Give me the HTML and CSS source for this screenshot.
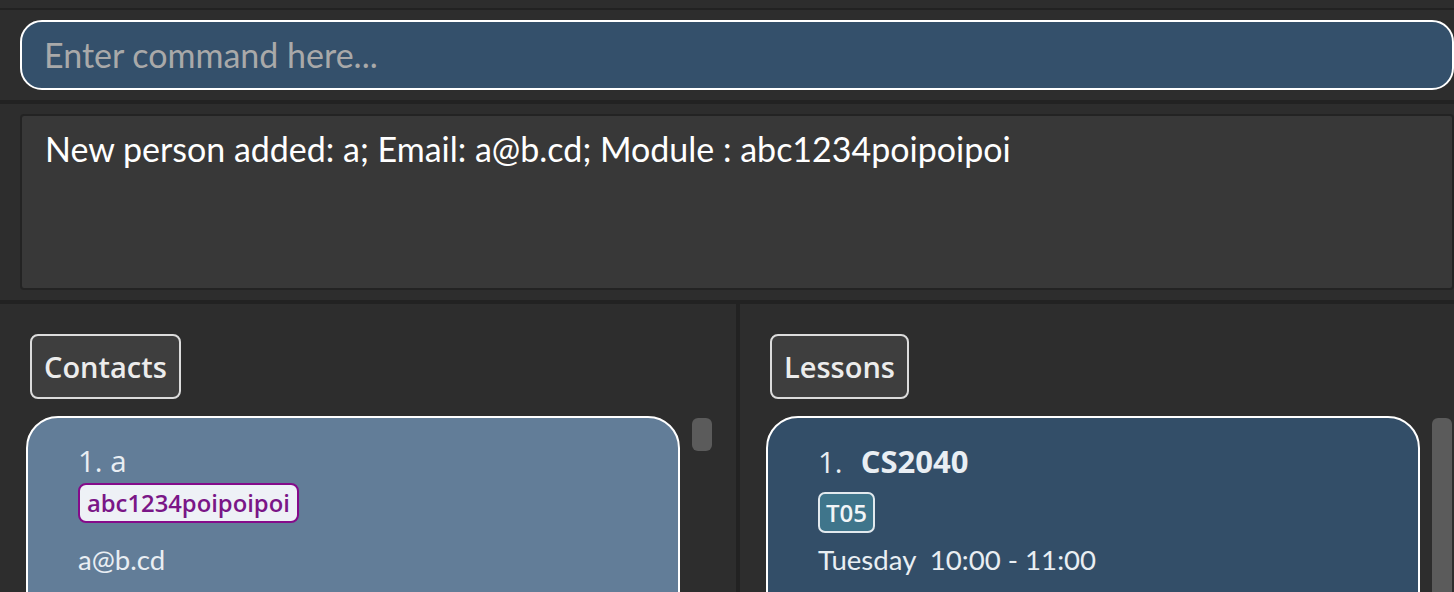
FILE: index.html
```html
<!DOCTYPE html>
<html>
<head>
<meta charset="utf-8">
<link rel="stylesheet" href="styles.css">
</head>
<body>
<div class="app">
  <div class="menubar"></div>
  <div class="sep sep-thin"></div>
  <div class="command-section">
    <div class="command-box">Enter command here...</div>
  </div>
  <div class="sep"></div>
  <div class="result-section">
    <div class="result-box">New person added: a; Email: a@b.cd; Module : abc1234poipoipoi</div>
  </div>
  <div class="sep"></div>
  <div class="panels">
    <div class="panel panel-left">
      <div class="panel-label">Contacts</div>
      <div class="list-row">
        <div class="card card-contact">
          <div class="card-title">1. a</div>
          <div class="tags"><span class="tag tag-module">abc1234poipoipoi</span></div>
          <div class="card-line email">a@b.cd</div>
        </div>
        <div class="scroll-track"><div class="thumb thumb-short"></div></div>
      </div>
    </div>
    <div class="divider"></div>
    <div class="panel panel-right">
      <div class="panel-label">Lessons</div>
      <div class="list-row">
        <div class="card card-lesson">
          <div class="card-title"><span class="idx">1.</span><span class="code">CS2040</span></div>
          <div class="tags"><span class="tag tag-lesson">T05</span></div>
          <div class="card-line time">Tuesday&nbsp; 10:00 - 11:00</div>
        </div>
        <div class="scroll-track"><div class="thumb thumb-long"></div></div>
      </div>
    </div>
  </div>
</div>
</body>
</html>
```
FILE: styles.css
```css
html, body {
  margin: 0;
  padding: 0;
  background: #2d2d2d;
  overflow: hidden;
}
.app {
  width: 1454px;
  height: 592px;
  display: flex;
  flex-direction: column;
  font-family: "Lato", "Open Sans", sans-serif;
}
.menubar {
  height: 8px;
  background: #2d2d2d;
}
.sep {
  height: 4px;
  background: #222222;
  flex: none;
}
.sep-thin {
  height: 2px;
}
.command-section {
  padding: 10px 0 10px 20px;
  height: 70px;
}
.command-box {
  box-sizing: border-box;
  height: 70px;
  background: #34506b;
  border: 2px solid #ffffff;
  border-radius: 22px;
  color: #a9a9a9;
  font-size: 34px;
  line-height: 66px;
  padding-left: 22px;
}
.result-section {
  padding: 10px 0 10px 20px;
  height: 176px;
}
.result-box {
  box-sizing: border-box;
  height: 176px;
  background: #383838;
  border: 2px solid #232323;
  border-radius: 4px;
  color: #ffffff;
  font-size: 34px;
  padding: 12px 0 0 23px;
  line-height: 42px;
}
.panels {
  flex: 1;
  display: flex;
  min-height: 0;
}
.panel {
  display: flex;
  flex-direction: column;
  padding-top: 30px;
  overflow: hidden;
}
.panel-left {
  width: 736px;
}
.panel-right {
  flex: 1;
}
.divider {
  width: 4px;
  background: #222222;
}
.panel-label {
  align-self: flex-start;
  margin-left: 30px;
  box-sizing: border-box;
  height: 65px;
  padding: 0 12px;
  border: 2px solid #dcdcdc;
  border-radius: 8px;
  background: #3e3e3e;
  color: #ececec;
  font-family: "Open Sans", sans-serif;
  font-weight: 600;
  font-size: 29px;
  line-height: 62px;
}
.list-row {
  display: flex;
  margin-top: 17px;
  padding-left: 26px;
  gap: 12px;
  flex: 1;
}
.card {
  box-sizing: border-box;
  width: 654px;
  height: 240px;
  border: 2px solid #ffffff;
  border-radius: 32px;
  padding: 24px 0 0 50px;
  color: #e9eef3;
}
.card-contact {
  background: #627d98;
}
.card-lesson {
  background: #334e68;
}
.card-title {
  font-family: "Open Sans", sans-serif;
  font-size: 29.5px;
  line-height: 38px;
  height: 38px;
}
.card-lesson .idx {
  font-weight: 400;
  margin-right: 18px;
}
.card-lesson .code {
  font-weight: 700;
  font-size: 31px;
}
.tags {
  display: flex;
}
.tag {
  box-sizing: border-box;
  font-family: "Open Sans", sans-serif;
  font-weight: 600;
  border-radius: 8px;
}
.tag-module {
  margin-top: 3px;
  height: 40px;
  line-height: 36px;
  padding: 0 7px;
  background: #eef1f6;
  border: 2px solid #850b8a;
  color: #7a1687;
  font-size: 23.8px;
}
.tag-lesson {
  margin-top: 12px;
  height: 41px;
  line-height: 37px;
  padding: 0 6px;
  background: #3f758b;
  border: 2px solid #e2e9ee;
  color: #f2f5f7;
  font-size: 24px;
  border-radius: 7px;
}
.card-line {
  font-family: "Lato", sans-serif;
  font-size: 27.6px;
  line-height: 34px;
}
.email {
  margin-top: 20px;
}
.time {
  margin-top: 10px;
}
.scroll-track {
  width: 20px;
  padding-top: 2px;
}
.thumb {
  background: #5b5b5b;
  border-radius: 6px;
  width: 20px;
}
.thumb-short {
  height: 33px;
}
.thumb-long {
  height: 300px;
}
```
